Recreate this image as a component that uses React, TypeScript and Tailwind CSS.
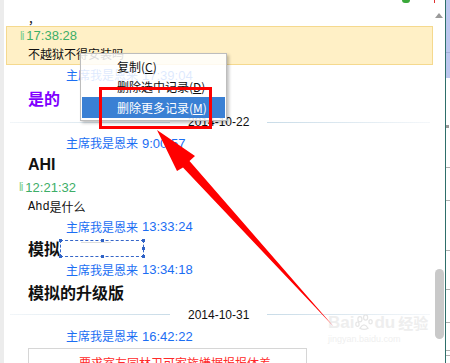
import React from "react";

const CJK = '"Noto Sans CJK SC", "Liberation Sans", sans-serif';
const ARIAL = '"Liberation Sans", "Noto Sans CJK SC", sans-serif';

function Name({ time }: { time: string }) {
  return (
    <div className="flex items-center pl-[62px] text-[#1b6ef3] whitespace-nowrap leading-none">
      <span className="text-[12px]" style={{ fontFamily: CJK }}>主席我是恩来</span>
      <span className="text-[13px] ml-[4px]" style={{ fontFamily: ARIAL }}>{time}</span>
    </div>
  );
}

function Li({ time }: { time: string }) {
  return (
    <div className="flex items-center pl-[15px] whitespace-nowrap leading-none" style={{ fontFamily: ARIAL }}>
      <span className="text-[12px] text-[#7ccf93] tracking-[-1px]">li</span>
      <span className="text-[13px] text-[#3dae67] ml-[3px]">{time}</span>
    </div>
  );
}

function DateRow({ date, h }: { date: string; h: string }) {
  return (
    <div className={`flex items-center pl-[6px] pr-[3px] ${h}`}>
      <div className="w-[160px] h-px bg-gradient-to-r from-[#f2f6f9] to-[#c9dce8]" />
      <span className="mx-[18px] text-[12px] text-[#111] leading-none" style={{ fontFamily: ARIAL }}>{date}</span>
      <div className="flex-1 h-px bg-gradient-to-r from-[#c9dce8] to-[#f4f7fa]" />
    </div>
  );
}

export default function App() {
  return (
    <div className="relative w-[450px] h-[363px] overflow-hidden bg-white flex">
      {/* left gray strip */}
      <div className="w-[4px] bg-[#ececec] shrink-0" />

      {/* content column */}
      <div className="w-[429px] shrink-0 flex flex-col [&>*]:shrink-0">
        {/* comma */}
        <div className="h-[26px] pl-[24px] pt-[6px]">
          <span className="text-[12px] leading-[14px] text-[#111]" style={{ fontFamily: CJK }}>，</span>
        </div>

        {/* highlighted message */}
        <div className="ml-[2px] h-[39px] border border-[#f5d98e] bg-[#fff0c6] flex flex-col">
          <div className="h-[17px] flex items-center">
            <div className="-ml-[2px] w-full">
              <Li time="17:38:28" />
            </div>
          </div>
          <div className="h-[19px] flex items-center pl-[21px] text-[12px] text-[#111]" style={{ fontFamily: CJK }}>
            不越狱不得安装吗
          </div>
        </div>

        <div className="h-[20px] flex items-center">
          <Name time="17:39:04" />
        </div>

        <div className="h-[26px] flex items-center pl-[24px]">
          <span className="text-[16px] font-bold text-[#7f00ff] leading-none" style={{ fontFamily: CJK }}>是的</span>
        </div>

        <DateRow date="2014-10-22" h="h-[22px]" />

        <div className="h-[20px] flex items-center">
          <Name time="9:00:57" />
        </div>

        <div className="h-[24px] flex items-center pl-[24px]">
          <span className="text-[16px] font-bold text-[#111] leading-none" style={{ fontFamily: ARIAL }}>AHI</span>
        </div>

        <div className="h-[20px] flex items-center">
          <Li time="12:21:32" />
        </div>

        <div className="h-[20px] flex items-center pl-[24px] text-[12px] text-[#111] leading-none">
          <span style={{ fontFamily: '"Liberation Mono", monospace' }}>Ahd</span>
          <span style={{ fontFamily: CJK }}>是什么</span>
        </div>

        <div className="h-[19px] flex items-center">
          <Name time="13:33:24" />
        </div>

        <div className="h-[24px] flex items-center pl-[24px]">
          <span className="text-[16px] font-bold text-[#111] leading-none" style={{ fontFamily: CJK }}>模拟</span>
          <div className="relative w-[84px] h-[17px] border border-dashed border-[#3566c8] ml-0">
            <div className="absolute left-[20px] top-[1px] w-[30px] h-px bg-[#dcdcdc]" />
            <div className="absolute -left-[2px] -top-[2px] w-[3px] h-[3px] bg-[#2f62c6]" />
            <div className="absolute left-[40px] -top-[2px] w-[3px] h-[3px] bg-[#2f62c6]" />
            <div className="absolute -right-[2px] -top-[2px] w-[3px] h-[3px] bg-[#2f62c6]" />
            <div className="absolute -right-[2px] top-[6px] w-[3px] h-[3px] bg-[#2f62c6]" />
            <div className="absolute -left-[2px] -bottom-[2px] w-[3px] h-[3px] bg-[#2f62c6]" />
            <div className="absolute left-[40px] -bottom-[2px] w-[3px] h-[3px] bg-[#2f62c6]" />
            <div className="absolute -right-[2px] -bottom-[2px] w-[3px] h-[3px] bg-[#2f62c6]" />
          </div>
        </div>

        <div className="h-[19px] flex items-center">
          <Name time="13:34:18" />
        </div>

        <div className="h-[25px] flex items-center pl-[24px]">
          <span className="text-[16px] font-bold text-[#111] leading-none" style={{ fontFamily: CJK }}>模拟的升级版</span>
        </div>

        <DateRow date="2014-10-31" h="h-[21px]" />

        <div className="h-[22px] flex items-center">
          <Name time="16:42:22" />
        </div>

        <div className="ml-[24px] mt-[1px] w-[279px] h-[40px] border border-[#d6d6d6] pl-[50px] pt-[8px]">
          <div className="text-[12px] text-[#ff2a2a] whitespace-nowrap leading-[12px]" style={{ fontFamily: CJK }}>
            要求室友同林卫可家族嫌据报报体差
          </div>
        </div>
      </div>

      {/* scrollbar column */}
      <div className="w-[12px] shrink-0 flex flex-col items-center">
        <div className="mt-[13px] w-0 h-0 border-l-[4px] border-r-[4px] border-b-[5px] border-l-transparent border-r-transparent border-b-[#9a9a9a]" />
        <div className="mt-[251px] w-[9px] h-[70px] rounded-full bg-[#c9c9c9]" />
      </div>

      {/* teal divider */}
      <div className="w-px shrink-0 bg-[#2e6f6a]" />

      {/* right strip */}
      <div className="flex-1 flex flex-col">
        <div className="h-[78px] bg-[#bcc7ee] flex flex-col">
          <div className="h-[52px]" />
          <div className="h-px bg-[#a3afd8]" />
        </div>
        <div className="flex-1 relative">
          <div className="absolute left-0 top-[47px] w-[3px] h-[3px] bg-[#9a9a9a]" />
          <div className="absolute left-0 top-[89px] w-full h-px bg-[#b0b0b0]" />
          <div className="absolute left-0 top-[122px] w-full h-px bg-[#b0b0b0]" />
          <div className="absolute left-0 top-[172px] w-full h-px bg-[#b0b0b0]" />
          <div className="absolute left-0 top-[211px] w-full h-px bg-[#b0b0b0]" />
          <div className="absolute left-0 top-[244px] w-full h-px bg-[#b0b0b0]" />
          <div className="absolute left-0 top-[272px] w-full h-px bg-[#b0b0b0]" />
          <div className="absolute left-0 top-[277px] w-full h-px bg-[#b0b0b0]" />
        </div>
      </div>

      {/* top-right partial icons */}
      <div className="absolute left-[402px] -top-[3px] w-[8px] h-[6px] rounded-full bg-[#3aa83a]" />
      <div className="absolute left-[434px] top-0 w-[1px] h-[3px] bg-[#e03030]" />

      {/* context menu */}
      <div
        className="absolute left-[80px] top-[53px] w-[147px] h-[68px] bg-white/85 border border-[#bdbdbd] shadow-[2px_2px_3px_rgba(0,0,0,0.25)] pt-[2px] text-[12px] text-[#111]"
        style={{ fontFamily: CJK }}
      >
        <div className="h-[21px] flex items-center pl-[36px] leading-none">
          复制(<span className="underline">C</span>)
        </div>
        <div className="h-[20px] flex items-center pl-[36px] leading-none">
          删除选中记录(<span className="underline">D</span>)
        </div>
        <div className="mx-[1px] h-[21px] flex items-center pl-[35px] leading-none bg-[#3a80d4] text-white">
          删除更多记录(<span className="underline">M</span>)
        </div>
      </div>

      {/* red highlight box */}
      <div className="absolute left-[99px] top-[87px] w-[113px] h-[42px] border-[3px] border-[#ff0000]" />

      {/* watermark */}
      <div className="absolute left-[328px] top-[314px] flex flex-col items-start select-none">
        <div className="flex items-center gap-[1px] leading-none">
          <span className="text-[17px] font-bold text-[#eeeeee]" style={{ fontFamily: ARIAL }}>Bai</span>
          <svg width="18" height="17" viewBox="0 0 22 20">
            <g fill="none" stroke="#e6e6e6" strokeWidth="1.5">
              <ellipse cx="6" cy="6" rx="2.5" ry="3.2" />
              <ellipse cx="13" cy="4" rx="2.5" ry="3.2" />
              <ellipse cx="19" cy="9" rx="2" ry="2.6" />
              <ellipse cx="3" cy="12" rx="2" ry="2.6" />
              <path d="M6 17 Q11 9 16 17 Q11 20 6 17Z" />
            </g>
          </svg>
          <span className="text-[17px] font-bold text-[#eeeeee]" style={{ fontFamily: ARIAL }}>du</span>
          <span className="text-[15px] font-bold text-[#eeeeee] ml-[2px]" style={{ fontFamily: CJK }}>经验</span>
        </div>
        <span className="text-[9px] text-[#efefef] leading-none mt-[4px]" style={{ fontFamily: ARIAL }}>jingyan.baidu.com</span>
      </div>

      {/* red arrow */}
      <svg className="absolute left-0 top-0 pointer-events-none" width="450" height="363" viewBox="0 0 450 363">
        <polygon
          fill="#ff0000"
          points="157,130 195,156 189.5,161 334,327 183,167.5 177,171"
        />
      </svg>
    </div>
  );
}
